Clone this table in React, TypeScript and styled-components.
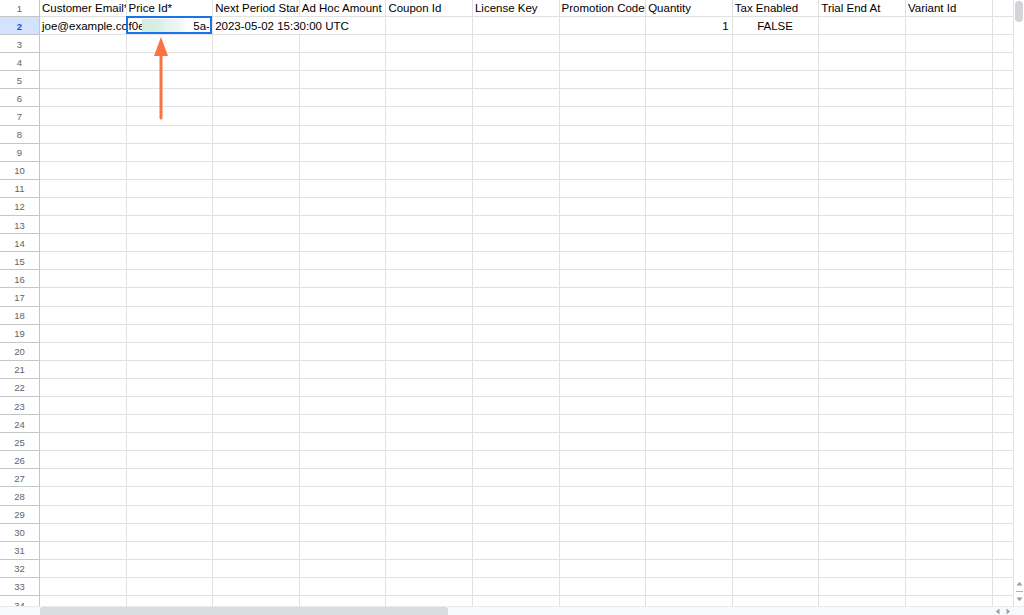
import React from "react";
import styled, { createGlobalStyle } from "styled-components";

const GlobalStyle = createGlobalStyle`
  html, body {
    margin: 0;
    padding: 0;
    background: #ffffff;
  }
  body {
    font-family: "Liberation Sans", Arial, sans-serif;
  }
`;

const COL_W = 86.6;
const ROW_H = 18.1;
const headers = [
  "Customer Email*",
  "Price Id*",
  "Next Period Start",
  "Ad Hoc Amount",
  "Coupon Id",
  "License Key",
  "Promotion Code",
  "Quantity",
  "Tax Enabled",
  "Trial End At",
  "Variant Id",
];

export default function App() {
  const emptyRows = Array.from({ length: 32 }, (_, i) => i + 3);

  return (
    <>
      <GlobalStyle />
      <Page>
        <Main>
          <Sheet>
            {/* row 1: column titles */}
            <Row $height={17}>
              <RowLabel>1</RowLabel>
              {headers.map((h) => (
                <Cell key={h}>{h}</Cell>
              ))}
              <Cell $last />
            </Row>

            {/* row 2: sample data */}
            <Row $height={ROW_H}>
              <RowLabel $active>2</RowLabel>
              <Cell>joe@example.com</Cell>
              <Cell $selected>
                f0e
                <Redacted />
                <Tail>5a-4</Tail>
                <SelectionBox />
              </Cell>
              <Cell $overflow>2023-05-02 15:30:00 UTC</Cell>
              <Cell />
              <Cell />
              <Cell />
              <Cell />
              <Cell $align="flex-end">1</Cell>
              <Cell $align="center">FALSE</Cell>
              <Cell />
              <Cell />
              <Cell $last />
            </Row>

            {emptyRows.map((n) => (
              <Row key={n} $height={ROW_H}>
                <RowLabel>{n}</RowLabel>
                {headers.map((h) => (
                  <Cell key={h} />
                ))}
                <Cell $last />
              </Row>
            ))}
          </Sheet>

          <VScroll>
            <VThumb />
            <VSpacer />
            <ArrowBtn>
              <svg width="7" height="5" viewBox="0 0 7 5">
                <path d="M0.5 4.5 L3.5 0.8 L6.5 4.5 Z" fill="#9aa0a6" />
              </svg>
            </ArrowBtn>
            <VMark />
            <ArrowBtn>
              <svg width="7" height="5" viewBox="0 0 7 5">
                <path d="M0.5 0.5 L3.5 4.2 L6.5 0.5 Z" fill="#9aa0a6" />
              </svg>
            </ArrowBtn>
            <VBottomPad />
          </VScroll>
        </Main>

        <HScroll>
          <HCorner />
          <HTrack>
            <HThumb />
          </HTrack>
          <HArrows>
            <svg width="5" height="7" viewBox="0 0 5 7">
              <path d="M4.5 0.5 L0.8 3.5 L4.5 6.5 Z" fill="#9aa0a6" />
            </svg>
            <svg width="5" height="7" viewBox="0 0 5 7">
              <path d="M0.5 0.5 L4.2 3.5 L0.5 6.5 Z" fill="#9aa0a6" />
            </svg>
          </HArrows>
        </HScroll>

        {/* annotation arrow pointing at Price Id cell */}
        <Pointer width="20" height="84" viewBox="0 0 20 84">
          <line x1="10" y1="20" x2="10" y2="82" stroke="#fa7343" strokeWidth="3" strokeLinecap="round" />
          <path d="M10 1 L17 20 L3 20 Z" fill="#fa7343" />
        </Pointer>
      </Page>
    </>
  );
}

const Page = styled.div`
  position: relative;
  width: 1024px;
  height: 615px;
  display: flex;
  flex-direction: column;
  overflow: hidden;
  background: #ffffff;
`;

const Main = styled.div`
  flex: 1;
  min-height: 0;
  display: flex;
`;

const Sheet = styled.div`
  flex: 1;
  min-width: 0;
  overflow: hidden;
  display: flex;
  flex-direction: column;
`;

const Row = styled.div<{ $height: number }>`
  flex: none;
  height: ${(p) => p.$height}px;
  display: grid;
  grid-template-columns: 40px repeat(11, ${COL_W}px) 1fr;
`;

const RowLabel = styled.div<{ $active?: boolean }>`
  display: flex;
  align-items: center;
  justify-content: center;
  padding-top: 1px;
  font-size: 9.5px;
  color: ${(p) => (p.$active ? "#0b57d0" : "#5f6368")};
  font-weight: ${(p) => (p.$active ? 700 : 400)};
  background: ${(p) => (p.$active ? "#d3e3fd" : "#ffffff")};
  border-right: 1px solid #c4c7c5;
  border-bottom: 1px solid #c4c7c5;
  box-sizing: border-box;
`;

const Cell = styled.div<{
  $align?: string;
  $overflow?: boolean;
  $selected?: boolean;
  $last?: boolean;
}>`
  position: relative;
  display: flex;
  align-items: flex-end;
  justify-content: ${(p) => p.$align || "flex-start"};
  padding: 0 3px 1px 2px;
  box-sizing: border-box;
  font-size: 11.5px;
  line-height: 13px;
  color: #000000;
  white-space: nowrap;
  overflow: ${(p) => (p.$overflow || p.$selected ? "visible" : "hidden")};
  border-bottom: 1px solid #e1e1e1;
  border-right: ${(p) => (p.$overflow || p.$last ? "none" : "1px solid #e1e1e1")};
  z-index: ${(p) => (p.$selected ? 3 : p.$overflow ? 2 : 1)};
  background: #ffffff;
`;

const Redacted = styled.span`
  display: inline-block;
  width: 50px;
  height: 15px;
  margin: 0 0 -1px -3px;
  background: linear-gradient(
    90deg,
    #d3ecdf 0%,
    #d8efe3 35%,
    #e6f2ee 55%,
    #eef5f7 80%,
    #ffffff 100%
  );
`;

const Tail = styled.span`
  margin-left: 5px;
  overflow: hidden;
  width: 17px;
`;

const SelectionBox = styled.div`
  position: absolute;
  inset: -1px 0 0 -1px;
  border: 2px solid #1a73e8;
  pointer-events: none;
`;

const VScroll = styled.div`
  position: relative;
  z-index: 4;
  flex: 0 0 11px;
  width: 11px;
  display: flex;
  flex-direction: column;
  align-items: center;
  background: #ffffff;
  border-left: 1px solid #e1e1e1;
  box-sizing: border-box;
`;

const VThumb = styled.div`
  flex: none;
  display: block;
  margin-top: 1px;
  width: 8px;
  height: 21px;
  border-radius: 4px;
  background: #d2d4d8;
`;

const VSpacer = styled.div`
  flex: 1 1 auto;
`;

const ArrowBtn = styled.div`
  flex: none;
  height: 12px;
  display: flex;
  align-items: center;
  justify-content: center;
`;

const VMark = styled.div`
  flex: none;
  width: 7px;
  height: 1.5px;
  margin: 1px 0;
  background: #8ab4f8;
`;

const VBottomPad = styled.div`
  flex: none;
  height: 1px;
`;

const HScroll = styled.div`
  flex: none;
  height: 8px;
  display: flex;
  background: #f8f9fa;
  border-top: 1px solid #ebebeb;
`;

const HCorner = styled.div`
  width: 40px;
  background: #f8f9fa;
`;

const HTrack = styled.div`
  width: 952px;
  display: flex;
`;

const HThumb = styled.div`
  width: 408px;
  height: 100%;
  border-radius: 3px 3px 0 0;
  background: #dadce0;
`;

const HArrows = styled.div`
  flex: 1;
  display: flex;
  align-items: center;
  justify-content: space-around;
  padding-right: 10px;
`;

const Pointer = styled.svg`
  position: absolute;
  left: 151px;
  top: 36px;
  z-index: 5;
`;
